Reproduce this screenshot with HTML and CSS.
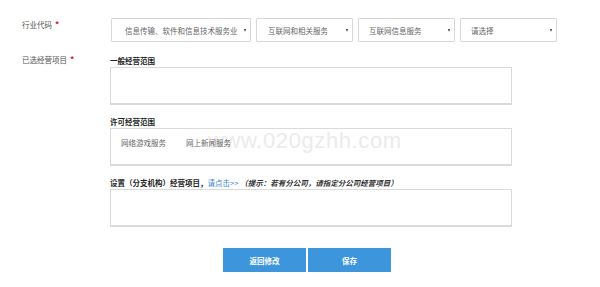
FILE: index.html
```html
<!DOCTYPE html>
<html lang="zh-CN">
<head>
<meta charset="utf-8">
<title>经营范围</title>
<link rel="stylesheet" href="styles.css">
</head>
<body>
<div class="form">
  <div class="row row-industry">
    <div class="label">行业代码<span class="star">*</span></div>
    <div class="selects">
      <div class="select s1"><span class="val">信息传输、软件和信息技术服务业</span><i class="arrow"></i></div>
      <div class="select s2"><span class="val">互联网和相关服务</span><i class="arrow"></i></div>
      <div class="select s3"><span class="val">互联网信息服务</span><i class="arrow"></i></div>
      <div class="select s4"><span class="val">请选择</span><i class="arrow"></i></div>
    </div>
  </div>
  <div class="row row-scope">
    <div class="label label-scope">已选经营项目<span class="star">*</span></div>
    <div class="sections">
      <div class="section">
        <div class="title">一般经营范围</div>
        <div class="box"></div>
      </div>
      <div class="section">
        <div class="title">许可经营范围</div>
        <div class="box box-items">
          <span class="watermark">www.020gzhh.com</span>
          <span class="item">网络游戏服务</span>
          <span class="item">网上新闻服务</span>
        </div>
      </div>
      <div class="section">
        <div class="title">设置（分支机构）经营项目，<a class="link" href="#">请点击&gt;&gt;</a><em class="hint">（提示：若有分公司，请指定分公司经营项目）</em></div>
        <div class="box"></div>
      </div>
    </div>
  </div>
  <div class="actions">
    <button class="btn" type="button">返回修改</button>
    <button class="btn" type="button">保存</button>
  </div>
</div>
</body>
</html>
```
FILE: styles.css
```css
html, body {
  margin: 0;
  padding: 0;
  background: #fff;
}
body {
  width: 600px;
  height: 287px;
  overflow: hidden;
  font-family: "Noto Sans CJK SC", "Noto Sans", sans-serif;
  font-size: 7.5px;
  color: #555;
}
.form {
  padding-top: 18px;
}
.row {
  display: flex;
  align-items: flex-start;
}
.label {
  width: 110px;
  flex: 0 0 110px;
  box-sizing: border-box;
  padding-left: 22px;
  line-height: 8px;
  color: #555;
  white-space: nowrap;
}
.row-industry .label {
  margin-top: 2px;
}
.star {
  color: #d0111b;
  font-weight: bold;
  font-size: 8.5px;
  margin-left: 3px;
}
.selects {
  display: flex;
  gap: 5px;
  margin-left: 1px;
}
.select {
  height: 24px;
  box-sizing: border-box;
  border: 1px solid #d8d8d8;
  border-radius: 1px;
  display: flex;
  align-items: center;
  justify-content: space-between;
  padding: 0 4px 0 10px;
  color: #666;
  white-space: nowrap;
}
.s1 { width: 140px; padding-left: 13px; }
.s2, .s3, .s4 { width: 97px; }
.s2 { padding-left: 11px; }
.arrow {
  display: block;
  width: 0;
  height: 0;
  border-left: 1.5px solid transparent;
  border-right: 1.5px solid transparent;
  border-top: 3px solid #333;
}
.row-scope {
  margin-top: 13px;
}
.sections {
  width: 402px;
}
.section + .section {
  margin-top: 11px;
}
.title {
  line-height: 11px;
  height: 11px;
  margin-bottom: 1px;
  font-weight: bold;
  color: #222;
  white-space: nowrap;
}
.link {
  color: #3a86d4;
  font-weight: normal;
  text-decoration: none;
}
.hint {
  margin-left: 2px;
  font-style: italic;
  font-weight: bold;
  color: #333;
}
.box {
  height: 38px;
  box-sizing: border-box;
  border: 1px solid #dadada;
  border-bottom-width: 2px;
  background: #fff;
}
.box-items {
  position: relative;
  display: flex;
  gap: 20px;
  padding: 8px 0 0 10px;
  line-height: 12px;
  color: #666;
}
.item {
  position: relative;
  z-index: 1;
}
.watermark {
  position: absolute;
  left: 97px;
  top: -1px;
  font-family: "Liberation Sans", Arial, sans-serif;
  font-size: 22px;
  line-height: 26px;
  letter-spacing: 0.6px;
  color: #ebebeb;
  white-space: nowrap;
  z-index: 0;
  pointer-events: none;
}
.actions {
  display: flex;
  gap: 2px;
  margin-top: 21px;
  padding-left: 223px;
}
.btn {
  width: 83px;
  height: 24px;
  border: 0;
  border-radius: 0;
  padding: 0;
  background: #3d95dc;
  color: #fff;
  font-family: inherit;
  font-size: 7.5px;
  font-weight: bold;
  cursor: pointer;
}
```
